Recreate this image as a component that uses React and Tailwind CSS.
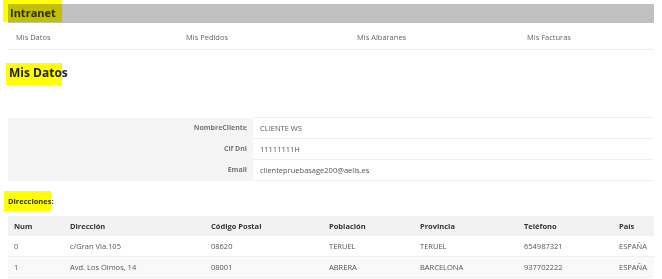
const datos = [
  ['NombreCliente', 'CLIENTE WS'],
  ['Cif Dni', '11111111H'],
  ['Email', 'clientepruebasage200@aelis.es'],
];

const cols = ['Num', 'Dirección', 'Código Postal', 'Población', 'Provincia', 'Teléfono', 'País'];

const direcciones = [
  ['0', 'c/Gran Via.105', '08620', 'TERUEL', 'TERUEL', '654987321', 'ESPAÑA'],
  ['1', 'Avd. Los Olmos, 14', '08001', 'ABRERA', 'BARCELONA', '937702222', 'ESPAÑA'],
];

const grid = 'grid grid-cols-[56px_141px_118px_91px_104px_95px_1fr]';

export default function App() {
  return (
    <div className="relative w-[662px] h-[279px] overflow-hidden bg-white font-['Open_Sans',sans-serif] text-[#555]">
      {/* cabecera */}
      <div className="mx-2 mt-1 h-[19px] bg-[#c0c0c0] flex items-center pl-[2px] text-[11px] font-bold text-[#2a2a2a]">
        Intranet
      </div>

      <nav className="mx-2 h-[27px] pt-[3px] grid grid-cols-[170px_171px_170px_1fr] items-center border-b border-[#ececec] text-[7.5px] text-[#666]">
        <span className="pl-2">Mis Datos</span>
        <span className="pl-2">Mis Pedidos</span>
        <span className="pl-2">Mis Albaranes</span>
        <span className="pl-2">Mis Facturas</span>
      </nav>

      <h2 className="mt-[12px] ml-[9px] h-[22px] flex items-center text-[12px] font-bold text-[#1e1e1e]">Mis Datos</h2>

      <table className="mt-[33px] mx-2 w-[646px] border-collapse text-[7.5px]">
        <tbody>
          {datos.map(([k, v]) => (
            <tr key={k} className="h-[21px]">
              <th className="w-[245px] bg-[#f5f5f5] pr-[6px] pt-[1px] text-right font-bold text-[#777] text-[7px]">{k}</th>
              <td className="pl-[7px] pt-[1px] border-y border-[#f0f0f0] text-[#555]">{v}</td>
            </tr>
          ))}
        </tbody>
      </table>

      <div className="mt-[10px] ml-2 h-[20px] pt-[2px] flex items-center text-[7.5px] font-bold text-[#333]">Direcciones:</div>

      <div className="mt-[5px] mx-2 text-[7.5px]">
        <div className={`${grid} h-[20px] pt-[1px] items-center bg-[#f2f2f2] font-bold text-[#333]`}>
          {cols.map((c) => (
            <span key={c} className="pl-[6px]">{c}</span>
          ))}
        </div>
        {direcciones.map((r, i) => (
          <div key={i} className={`${grid} h-[21px] pt-[1px] items-center border-b border-[#f0f0f0] ${i % 2 ? 'bg-[#f9f9f9]' : 'bg-white'}`}>
            {r.map((c, j) => (
              <span key={j} className="pl-[6px]">{c}</span>
            ))}
          </div>
        ))}
      </div>

      {/* resaltados amarillos */}
      <div className="absolute left-[3px] top-0 w-[59px] h-[22px] bg-[#ffff00] mix-blend-multiply" />
      <div className="absolute left-[6px] top-[63px] w-[56px] h-[22px] bg-[#ffff00] mix-blend-multiply" />
      <div className="absolute left-[4px] top-[191px] w-[47px] h-[20px] bg-[#ffff00] mix-blend-multiply" />
    </div>
  );
}
